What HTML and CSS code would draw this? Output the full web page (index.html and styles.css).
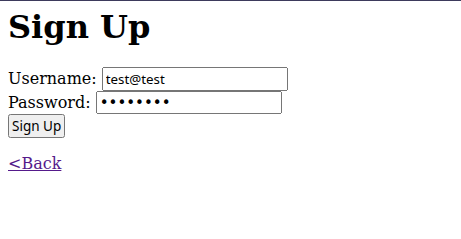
FILE: index.html
```html
<!DOCTYPE html>
<html lang="en">
<head>
  <meta charset="UTF-8" />
  <title>Sign Up</title>
  <link rel="stylesheet" href="styles.css">
</head>
<body>
  <div class="topbar"></div>
  <h1>Sign Up</h1>
  <form>
    <label>Username: <input type="text" name="username" value="test@test"></label><br>
    <label>Password: <input type="password" name="password" value="password"></label><br>
    <button type="submit">Sign Up</button>
  </form>
  <p><a href="#">&lt;Back</a></p>
</body>
</html>
```

FILE: styles.css
```css
body {
  font-family: "DejaVu Serif", serif;
}
.topbar {
  position: absolute;
  top: 0;
  left: 0;
  right: 0;
  height: 1px;
  background-color: #3d3a5c;
}
h1 {
  margin-top: 0;
}
input, button {
  font-family: "Noto Sans", sans-serif;
}
input {
  box-sizing: border-box;
  width: 186px;
}
input[type="password"] {
  font-family: "DejaVu Sans", sans-serif;
  font-size: 15px;
  height: 23px;
}
button {
  font-size: 13.5px;
  padding: 1px 2px;
}
a {
  color: #551a8b;
}
```
